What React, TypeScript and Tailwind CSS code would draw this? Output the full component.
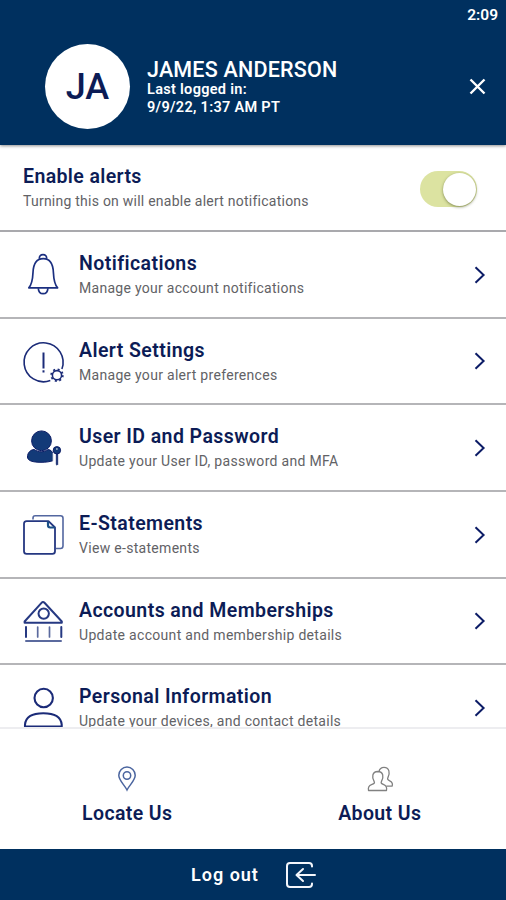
import React from "react";

const NAVY = "#0c1c66";

function BellIcon() {
  return (
    <svg width="60" height="60" viewBox="0 0 60 60" fill="none" stroke="#1b2f80" strokeWidth="1.7" strokeLinejoin="round">
      <path d="M29.500 13.800C29 11.200 30.600 9.600 33 9.600s4 1.600 3.500 4.200" />
      <path d="M18.800 42.800c3-3.200 3.800-6.500 4.200-15.300C23.400 18 26.600 13.600 33.200 13.600S43 18 43.400 27.500c.4 8.800 1.200 12.100 4.200 15.300z" />
      <path d="M28.300 43.200c.2 3.800 2.200 5.500 4.800 5.500s4.600-1.700 4.800-5.500" />
    </svg>
  );
}

function AlertIcon() {
  return (
    <svg width="60" height="60" viewBox="0 1 60 60" fill="none" stroke="#1b2b78" strokeWidth="1.6">
      <path d="M40.300 50.600A19.500 19.500 0 1 1 51.900 39" />
      <path d="M33.500 22.500v16" strokeWidth="2" />
      <path d="M33.500 40.300v2.200" strokeWidth="2" />
      <circle cx="47" cy="45.200" r="4.600" />
      <circle cx="47" cy="45.200" r="5.800" strokeWidth="1.800" strokeDasharray="2 2.550" />
    </svg>
  );
}

function UserKeyIcon() {
  return (
    <svg width="60" height="60" viewBox="0 0 60 60" fill="#133a78" stroke="#0c1c66" strokeWidth="1">
      <circle cx="31.500" cy="22.800" r="9.900" />
      <path d="M17.500 39c0-4.500 3-7.300 6.800-7.500 4.200 3 9.600 3 13.800 0 2.600.3 4.500 2 5.300 5v6c-3 1.200-7.400 1.800-12.400 1.800-8.500 0-13.500-1.600-13.500-5.300z" />
      <path d="M43.300 35v8.500" stroke="#fff" strokeWidth="1.200" />
      <circle cx="46.900" cy="32.300" r="3.700" />
      <path d="M46.300 36v10.500l.7.700.7-.7V36z" strokeWidth=".8" />
      <circle cx="46.900" cy="31" r=".8" fill="#fff" stroke="none" />
    </svg>
  );
}

function PagesIcon() {
  return (
    <svg width="60" height="60" viewBox="0 0 60 60" fill="none" strokeLinejoin="round">
      <path d="M23 15.500V14q0-2.200 2.200-2.200h25.300q2.500 0 2.500 2.500v27.500q0 2.700-2.500 2.700H46" stroke="#5367a0" strokeWidth="1.600" />
      <path d="M38.500 17.200H16.600q-2.600 0-2.600 2.600v27.400q0 2.600 2.600 2.600h25.800q2.600 0 2.600-2.600V23.500z" stroke="#253781" strokeWidth="1.800" />
      <path d="M38 17.500v3.800q0 2.200 2.200 2.200H45" stroke="#1b5088" strokeWidth="2.200" />
    </svg>
  );
}

function BankIcon() {
  return (
    <svg width="60" height="60" viewBox="0 1 60 60" fill="none" stroke="#263982" strokeWidth="2" strokeLinecap="round" strokeLinejoin="round">
      <path d="M14.600 31.500L31.500 12.800q1.500-1.600 3 0L51.800 31.500v1.200H14.600z" />
      <circle cx="33.700" cy="23.600" r="5.200" />
      <path d="M16 37v10M51.300 37v10" />
      <path d="M27.700 37v10M39.500 37v10" strokeWidth="1.700" stroke="#5b6a9e" />
      <path d="M16 51h35" stroke="#5b6a9e" />
    </svg>
  );
}

function PersonIcon() {
  return (
    <svg width="60" height="60" viewBox="0 2.500 60 60" fill="none" stroke="#1b2b78" strokeWidth="2.100" strokeLinejoin="round">
      <circle cx="33.700" cy="22.500" r="9.200" />
      <path d="M15 51v-2C15.700 41.500 22.500 37.700 33.300 37.700S51 41.500 51.700 49v2z" />
    </svg>
  );
}

function Chevron() {
  return (
    <svg width="12" height="18" viewBox="0 0 12 18" fill="none" stroke={NAVY} strokeWidth="2">
      <path d="M1.500 1.200L9.600 9l-8.100 7.800" />
    </svg>
  );
}

type Row = { title: string; text: string; icon: React.ReactNode; textStyle: string };

const rows: Row[] = [
  { title: "Notifications", text: "Manage your account notifications", icon: <BellIcon />, textStyle: "tracking-[0.28px]" },
  { title: "Alert Settings", text: "Manage your alert preferences", icon: <AlertIcon />, textStyle: "tracking-[0.3px]" },
  { title: "User ID and Password", text: "Update your User ID, password and MFA", icon: <UserKeyIcon />, textStyle: "tracking-[0.31px]" },
  { title: "E-Statements", text: "View e-statements", icon: <PagesIcon />, textStyle: "tracking-[0.3px]" },
  { title: "Accounts and Memberships", text: "Update account and membership details", icon: <BankIcon />, textStyle: "tracking-[0.31px]" },
  { title: "Personal Information", text: "Update your devices, and contact details", icon: <PersonIcon />, textStyle: "tracking-[0.28px]" },
];

export default function App() {
  return (
    <div className="flex h-[900px] w-[506px] flex-col overflow-hidden bg-white font-['Roboto',sans-serif] whitespace-nowrap">
      <header className="z-10 flex h-[145px] shrink-0 flex-col bg-[#00305f] text-white shadow-[0_1px_3px_rgba(0,0,0,0.45)]">
        <div className="flex h-[30px] justify-end pr-[8px] text-[15.500px] leading-[30px] font-semibold">2:09</div>
        <div className="flex items-center pt-[14px] pl-[45px]">
          <div className="flex size-[85px] items-center justify-center rounded-full bg-white pt-[1px] text-[36px] font-medium text-[#0c1c56]">JA</div>
          <div className="ml-[17px] flex flex-1 flex-col pt-[1px]">
            <div className="text-[21.500px] leading-[23px] font-medium tracking-[0.2px]">JAMES ANDERSON</div>
            <div className="text-[14.500px] leading-[18px] font-semibold tracking-[0.3px]">Last logged in:</div>
            <div className="text-[14.500px] leading-[18px] font-semibold tracking-[0.3px]">9/9/22, 1:37 AM PT</div>
          </div>
          <svg className="mr-[20px]" width="17" height="17" viewBox="0 0 17 17" stroke="#fff" strokeWidth="2.400">
            <path d="M1.500 1.500l14 14M15.500 1.500l-14 14" />
          </svg>
        </div>
      </header>

      <main className="h-[582px] shrink-0 overflow-hidden">
        <div className="flex h-[87.200px] items-start justify-between border-b-2 border-[#a9a9ad] pl-[23px] pr-[29px]">
          <div className="pt-[20px]">
            <div className="text-[19.500px] leading-[24px] font-semibold tracking-[0.38px] text-[#0c1c56]">Enable alerts</div>
            <div className="text-[14px] leading-[24px] tracking-[0.24px] text-[#626266]">Turning this on will enable alert notifications</div>
          </div>
          <div className="mt-[26px] flex h-[36px] w-[57px] items-center justify-end rounded-full bg-[#dce3a1] pr-[1px]">
            <div className="size-[33px] rounded-full bg-white shadow-[0_1px_3px_rgba(70,80,30,0.600)]" />
          </div>
        </div>
        {rows.map((r) => (
          <div key={r.title} className="flex h-[86.600px] items-start border-b-2 border-[#b5b5b8] pl-[10px]">
            <div className="mt-[12.500px] size-[60px] shrink-0">{r.icon}</div>
            <div className="ml-[9px] flex-1 pt-[20px]">
              <div className="text-[19.500px] leading-[24px] font-semibold tracking-[0.42px] text-[#0c1c56]">{r.title}</div>
              <div className={`text-[14px] leading-[24px] text-[#626266] ${r.textStyle}`}>{r.text}</div>
            </div>
            <div className="mt-[33.600px] mr-[20px]"><Chevron /></div>
          </div>
        ))}
      </main>

      <nav className="flex h-[122px] shrink-0 border-t-2 border-[#ededf0] bg-white">
        <div className="flex flex-1 flex-col items-center pt-[37px] pl-[1px]">
          <svg width="20" height="26" viewBox="0 0 20 26" fill="none" stroke="#4b659f" strokeWidth="1.500">
            <path d="M10 24C7.500 19 1.800 14.500 1.800 9.300a8.200 8.200 0 0 1 16.400 0C18.200 14.500 12.500 19 10 24z" />
            <circle cx="10" cy="9.500" r="3.700" />
          </svg>
          <div className="mt-[10px] text-[19.500px] leading-[24px] font-semibold tracking-[0.38px] text-[#0c1c56]">Locate Us</div>
        </div>
        <div className="flex flex-1 flex-col items-center pt-[37px]">
          <svg width="28" height="26" viewBox="0 0 28 26" fill="none" stroke="#818181" strokeWidth="1.300" strokeLinejoin="round">
            <path d="M2.500 24.500c-.6-3.400.4-5 3-5.900 2.800-.9 3.500-1.600 2.600-3.200C5.700 11.500 6 5.600 11.800 5.500c5.900.1 6 6 3.700 9.900-.9 1.600-.2 2.300 2.300 3.200 2.500.9 3.300 2.500 2.700 5.900z" />
            <path d="M13 5.500C13.600 2.700 15.400 1.400 18 1.400c5.600 0 6.100 5.900 4 10-.9 1.800-.3 2.500 1.700 3.400 2.300 1 3.200 2.700 2.500 5.400h-5.900" />
          </svg>
          <div className="mt-[10px] text-[19.500px] leading-[24px] font-semibold tracking-[0.38px] text-[#0c1c56]">About Us</div>
        </div>
      </nav>

      <footer className="flex h-[51px] shrink-0 items-center bg-[#00305f] pl-[191px] text-white">
        <div className="w-[68px] text-[18px] font-semibold tracking-[1px]">Log out</div>
        <svg className="ml-[26px]" width="32" height="28" viewBox="0 0 32 28" fill="none" stroke="#f4f6fc" strokeWidth="2" strokeLinecap="round" strokeLinejoin="round">
          <path d="M27 5.500V5q0-3-3-3H5Q2 2 2 5v18q0 3 3 3h19q3 0 3-3v-.5" />
          <path d="M30 14H12M18 8l-6.500 6 6.500 6" />
        </svg>
      </footer>
    </div>
  );
}
